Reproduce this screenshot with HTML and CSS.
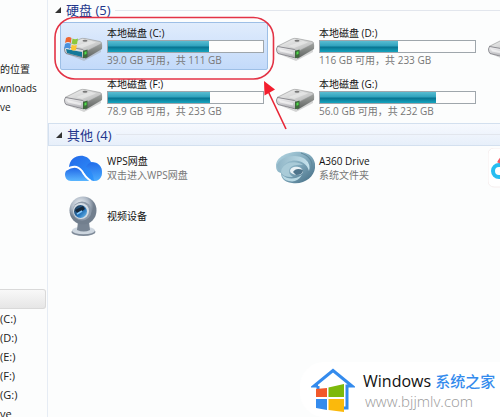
FILE: index.html
```html
<!DOCTYPE html>
<html lang="zh-CN">
<head>
<meta charset="utf-8">
<title>计算机</title>
<link rel="stylesheet" href="styles.css">
</head>
<body>
<svg class="defs" aria-hidden="true">
  <defs>
    <linearGradient id="top" x1="0" y1="0" x2="1" y2="1"><stop offset="0" stop-color="#f4f4f4"/><stop offset=".6" stop-color="#cfd0d0"/><stop offset="1" stop-color="#a9abab"/></linearGradient>
    <linearGradient id="front" x1="0" y1="0" x2="0" y2="1"><stop offset="0" stop-color="#f5f5f6"/><stop offset="1" stop-color="#a9a9ae"/></linearGradient>
    <linearGradient id="side" x1="0" y1="0" x2="0" y2="1"><stop offset="0" stop-color="#a2a5a2"/><stop offset="1" stop-color="#5d615f"/></linearGradient>
    <symbol id="drive" viewBox="0 0 39 24">
      <path d="M3 17 L20 22 L37 12 L37 15 L20 24 Z" fill="#999" opacity=".4"/>
      <path d="M19 13 L37.5 6 Q38.5 7 38 12 L22 21.5 L19 21 Z" fill="url(#side)"/>
      <path d="M1 9.500 L16 2 Q18 1 21 1.500 L36 4.500 Q38.500 5.500 37 7 L24 13.500 L19 14 Z" fill="url(#top)" stroke="#8f9191" stroke-width=".6"/>
      <path d="M1.500 9.500 L18.500 12.500 Q20 13 20 14.500 L19.500 21 L2 16.500 Q.5 15 .5 12 Z" fill="url(#front)" stroke="#77777d" stroke-width=".8"/>
      <path d="M3 12 L17 15 L17 17.500 L4 14.500 Z" fill="#fff" opacity=".55"/>
      <path d="M19 14 L23.500 12.500 L23.500 20 L19 21.300 Z" fill="#3d6a3b"/>
      <path d="M20.500 15 L22.500 14.300 L22.500 17 L20.500 17.700 Z" fill="#4fe04b"/>
      <ellipse cx="21" cy="3.800" rx="2.500" ry="1" fill="#777"/>
      <path d="M12 9 L27 4 L32 5.500 L18 11 Z" fill="#fff" opacity=".35"/>
    </symbol>
  </defs>
</svg>
<div class="explorer">
  <nav class="sidebar">
    <ul class="places">
      <li><a href="#">的位置</a></li>
      <li class="cut"><a href="#">wnloads</a></li>
      <li><a href="#">ve</a></li>
    </ul>
    <div class="current"></div>
    <ul class="drives">
      <li><a href="#">(C:)</a></li>
      <li><a href="#">(D:)</a></li>
      <li><a href="#">(E:)</a></li>
      <li><a href="#">(F:)</a></li>
      <li><a href="#">(G:)</a></li>
      <li><a href="#">ve</a></li>
    </ul>
  </nav>
  <main class="content">
    <h2 class="group"><svg class="caret" viewBox="0 0 6 6"><path d="M6 0V6H0Z"/></svg><span>硬盘 (5)</span></h2>
    <div class="tiles">
      <div class="tile selected">
        <svg class="icon drive" viewBox="0 0 39 24"><use href="#drive" width="39" height="24"/>
          <path d="M2 12 L18 15 L18 20 L3 16 Z" fill="#147898"/>
          <path d="M2 1 Q5 -1 7.500 1 L7 6 Q4 4 1 6 Z" fill="#ee6530"/>
          <path d="M8.500 1.500 Q11 3 14 1.500 L13 7 Q10 8 7.800 6.500 Z" fill="#8bc83c"/>
          <path d="M1 7 Q4 5 6.800 7 L6 12 Q3 10 0 12 Z" fill="#4a91dc"/>
          <path d="M7.700 7.500 Q10 9 12.800 8 L12 13 Q9 14 7 12.500 Z" fill="#fcc630"/>
        </svg>
        <div class="info"><span class="name">本地磁盘 (C:)</span><div class="bar"><div class="used" style="width:65%"></div></div><span class="note">39.0 GB 可用，共 111 GB</span></div>
      </div>
      <div class="tile">
        <svg class="icon drive"><use href="#drive"/></svg>
        <div class="info"><span class="name">本地磁盘 (D:)</span><div class="bar"><div class="used" style="width:50%"></div></div><span class="note">116 GB 可用，共 233 GB</span></div>
      </div>
      <div class="tile"><svg class="icon drive"><use href="#drive"/></svg></div>
      <div class="tile">
        <svg class="icon drive"><use href="#drive"/></svg>
        <div class="info"><span class="name">本地磁盘 (F:)</span><div class="bar"><div class="used" style="width:66%"></div></div><span class="note">78.9 GB 可用，共 233 GB</span></div>
      </div>
      <div class="tile">
        <svg class="icon drive"><use href="#drive"/></svg>
        <div class="info"><span class="name">本地磁盘 (G:)</span><div class="bar"><div class="used" style="width:75%"></div></div><span class="note">56.0 GB 可用，共 232 GB</span></div>
      </div>
    </div>
    <h2 class="group hover"><svg class="caret" viewBox="0 0 6 6"><path d="M6 0V6H0Z"/></svg><span>其他 (4)</span></h2>
    <div class="tiles others">
      <div class="tile">
        <svg class="icon" viewBox="0 0 39 40">
          <defs>
            <linearGradient id="w1" x1="0" y1="0" x2="1" y2="1"><stop offset="0" stop-color="#2468e8"/><stop offset="1" stop-color="#2f9cff"/></linearGradient>
            <linearGradient id="w2" x1="0" y1="0" x2="0" y2="1"><stop offset="0" stop-color="#1d62e5"/><stop offset="1" stop-color="#5ab6ff"/></linearGradient>
          </defs>
          <path d="M5 20 C5 6 23 4 27 14 C35 14 38 19 38 24 C38 30 34 33 30 33 Q25 33 20 25 Q15 17 5 20Z" fill="url(#w1)"/>
          <path d="M22 19 Q24 14 29 14.500 Q38 16 38 24 Q38 33 30 33 Q29 22 22 19Z" fill="url(#w2)" opacity=".65"/>
          <path d="M1 26 C2 18 13 16 18 23 Q20 30 27 33 H7 C3 33 1 30 1 26Z" fill="url(#w2)"/>
          <path d="M2 22 Q12 15 18 23 Q21 29 27 33" fill="none" stroke="#fff" stroke-width="1.800"/>
        </svg>
        <div class="info"><span class="name">WPS网盘</span><span class="note">双击进入WPS网盘</span></div>
      </div>
      <div class="tile">
        <svg class="icon" viewBox="0 0 39 40">
          <defs>
            <linearGradient id="a1" x1="0" y1="0" x2="1" y2="1"><stop offset="0" stop-color="#b7d9e5"/><stop offset=".5" stop-color="#7fa8bb"/><stop offset="1" stop-color="#3f6880"/></linearGradient>
            <linearGradient id="a2" x1="0" y1="0" x2="1" y2="0"><stop offset="0" stop-color="#8fb5c6"/><stop offset="1" stop-color="#c6e2ec"/></linearGradient>
          </defs>
          <path d="M0 18 C0 8 14 3 25 4 C36 5 40 13 39 20 C38 29 28 37 16 35 C8 34 5 30 5 25 C1 24 0 21 0 18Z" fill="url(#a1)"/>
          <path d="M1 17 C5 7 22 6 29 11 Q35 16 33 23 C31 14 20 10 12 14 Q6 17 5 23 Q1 21 1 17Z" fill="url(#a2)"/>
          <path d="M5 24 C6 14 20 12 27 17 Q18 16 14 20 Q11 25 17 29 C9 29 6 27 5 24Z" fill="#a9cbd8"/>
          <path d="M14 23 C15 17 26 18 27 23 C27 27 21 28 17 26 Q14 25 14 23Z" fill="#e9f2f6"/>
          <path d="M17 24 Q20 19 27 22 Q27 27 20 27Z" fill="#4e748b"/>
          <path d="M6 27 Q15 34 26 27 Q21 35 13 33 Q7 32 6 27Z" fill="#b9d9e4"/>
          <path d="M25 5 Q37 9 36 20" fill="none" stroke="#628a9e" stroke-width="1.200"/>
        </svg>
        <div class="info"><span class="name">A360 Drive</span><span class="note">系统文件夹</span></div>
      </div>
      <div class="tile">
        <svg class="icon" viewBox="0 0 39 40">
          <rect width="39" height="39" rx="6" fill="#fff" stroke="#f5eeee"/>
          <circle cx="11" cy="23" r="6" fill="none" stroke="#27bdf0" stroke-width="4"/>
          <path d="M11 15 Q13 10 18 8" fill="none" stroke="#f35a63" stroke-width="4"/>
        </svg>
      </div>
      <div class="tile">
        <svg class="icon" viewBox="0 0 39 40">
          <defs>
            <radialGradient id="c1" cx=".4" cy=".3"><stop offset="0" stop-color="#f5f8fb"/><stop offset=".65" stop-color="#aeb9c6"/><stop offset="1" stop-color="#727f8e"/></radialGradient>
            <linearGradient id="c2" x1="0" y1="0" x2="1" y2="1"><stop offset="0" stop-color="#20303f"/><stop offset=".6" stop-color="#2877bd"/><stop offset="1" stop-color="#7cc8f3"/></linearGradient>
          </defs>
          <ellipse cx="19.500" cy="36" rx="12" ry="4" fill="#7e8a98"/>
          <ellipse cx="19.500" cy="34.500" rx="11.500" ry="3.800" fill="#cdd6df"/>
          <path d="M14 26H25L26 34Q20 37 13 34Z" fill="#778493"/>
          <ellipse cx="19" cy="14.500" rx="13.500" ry="14" fill="url(#c1)"/>
          <circle cx="18" cy="15" r="9.500" fill="#8d9aa9"/>
          <circle cx="17" cy="15" r="8" fill="#d5dde5"/>
          <circle cx="16.500" cy="15.500" r="6.500" fill="url(#c2)"/>
          <path d="M11 14 L19 10 L21 13 L14 18Z" fill="#152739"/>
          <path d="M13 18 L18 15" stroke="#85caff" stroke-width="1.500"/>
        </svg>
        <div class="info"><span class="name">视频设备</span></div>
      </div>
    </div>
  </main>
</div>
<svg class="callout" viewBox="0 0 240 116" aria-hidden="true">
  <rect x="5" y="2.500" width="218.500" height="61.500" rx="20" fill="none" stroke="#e33345" stroke-width="1.600"/>
  <path d="M218 76 L236 114" stroke="#e82535" stroke-width="1.600"/>
  <path d="M214 66 L225 74.500 L214.500 80.500Z" fill="#f31e2e"/>
</svg>
<aside class="brand">
  <svg class="logo" viewBox="0 0 44 44" aria-hidden="true">
    <path d="M7 18 H3 L22 2.500 L41 18 H36 V40 H32 M7 18 V22" fill="none" stroke="#348bed" stroke-width="3"/>
    <path d="M5 21 L16 20 V29 H5Z" fill="#f1592a"/><path d="M17.500 19.500 L33 16 V29 H17.500Z" fill="#7db90b"/>
    <path d="M5 31 H16 V42 L5 40Z" fill="#348bed"/><path d="M17.500 31 H33 V44 L17.500 42Z" fill="#fbb90c"/>
  </svg>
  <div class="brand-text"><div class="title">Windows <b>系统之家</b></div><div class="url">www.bjjmlv.com</div></div>
</aside>
</body>
</html>
```
FILE: styles.css
```css
* { box-sizing: border-box; }
body {
  margin: 0;
  min-height: 100vh;
  overflow: hidden;
  position: relative;
  background: #fcfdfd;
  color: #222;
  font: 10px/14px "Open Sans", "Noto Sans CJK SC", sans-serif;
}
.defs { position: absolute; width: 0; height: 0; }
.explorer { display: flex; height: 100vh; overflow: hidden; }
.sidebar {
  flex: none;
  width: 48px;
  padding-top: 60px;
  border-right: 1px solid #e6ecf4;
  overflow: hidden;
}
.sidebar ul { list-style: none; margin: 0; padding: 0; }
.sidebar li { height: 19px; line-height: 19px; white-space: nowrap; }
.sidebar a { color: #222; text-decoration: none; }
.places { min-height: 229px; }
.sidebar .cut { margin-left: -2px; }
.current {
  height: 20px;
  margin-right: 1px;
  border: 1px solid #d9d9d9;
  border-left: 0;
  border-radius: 0 3px 3px 0;
  background: linear-gradient(#f8f8f8, #e6e6e6);
}
.drives { font-size: 11px; }
.content { flex: 1; min-width: 0; overflow: hidden; }
.group {
  display: flex;
  align-items: center;
  gap: 5px;
  height: 20px;
  margin: 0;
  padding-left: 7px;
  color: #22368c;
  font-size: 13px;
  font-weight: 400;
}
.group::after { content: ""; flex: 1; height: 1px; background: #e2e6ed; }
.group.hover {
  height: 23px;
  border: 1px solid #d3e0ef;
  border-width: 1px 0 1px 1px;
  background: linear-gradient(#f6f9fe, #e7effa);
}
.caret { width: 6px; height: 6px; fill: #333; }
.tiles {
  display: grid;
  grid-template-columns: repeat(3, 208px);
  grid-auto-rows: 48px;
  gap: 3px 4px;
  padding: 2px 0 2px 12px;
}
.tile {
  display: flex;
  align-items: center;
  gap: 4px;
  padding: 0 3px;
  border: 1px solid transparent;
  border-radius: 2px;
}
.selected { border-color: #9dbfe6; background: linear-gradient(#e0ecfc, #c3dafa); }
.icon { flex: none; width: 39px; height: 40px; }
.drive { height: 24px; margin-top: 6px; }
.info { flex: 1; display: flex; flex-direction: column; white-space: nowrap; }
.bar {
  height: 13px;
  border: 1px solid #9fa6ac;
  background: #fdfdfd;
}
.used { height: 100%; background: linear-gradient(#58bdd2, #2fa2bd 45%, #087390 55%, #16a5bf); }
.name { color: #111; }
.note { color: #777; }
.others { grid-auto-rows: 44px; gap: 4px; padding-top: 0; }
.callout { position: absolute; left: 50px; top: 15px; width: 240px; height: 116px; }
.brand {
  position: absolute;
  right: 0;
  bottom: 0;
  display: flex;
  align-items: center;
  gap: 8px;
  width: 200px;
  height: 55px;
  padding-left: 11px;
  border-radius: 24px 0 0 24px;
  background: #fff;
}
.logo { flex: none; width: 44px; height: 44px; }
.brand-text { white-space: nowrap; }
.title { color: #111; font-size: 16px; line-height: 22px; }
.title b { color: #348bed; font-size: 15px; font-weight: 500; }
.url { padding-left: 2px; color: #999; font-size: 15px; font-weight: 300; line-height: 18px; }
```
